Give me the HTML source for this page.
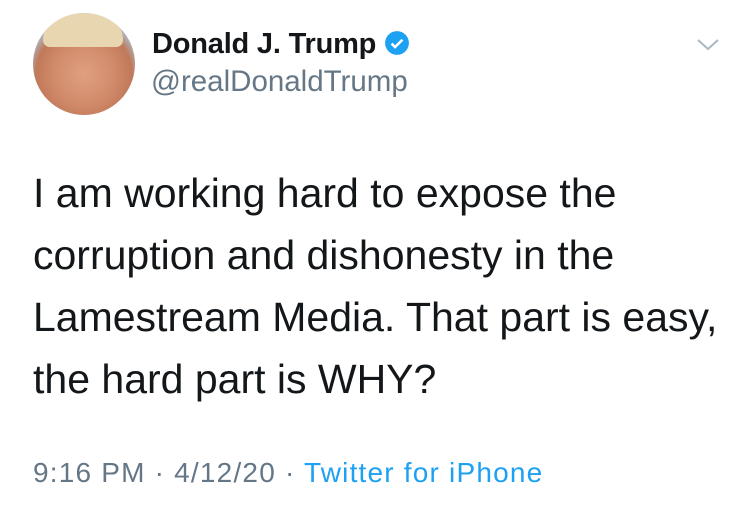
<!DOCTYPE html>
<html><head><style>
body{margin:0;width:750px;height:508px;background:#fff;font-family:"Liberation Sans",sans-serif;position:relative;overflow:hidden}
.av{position:absolute;left:33px;top:13px;width:102px;height:102px;border-radius:50%;background:radial-gradient(circle at 50% 60%,#e0a080 0%,#d08a6a 40%,#c07a5a 60%,#a9c4dc 75%);overflow:hidden}
.hair{position:absolute;left:10px;top:0;width:80px;height:34px;background:#e8d6b0;border-radius:40px 40px 10px 10px}
.name{position:absolute;left:152px;top:28px;font-size:29px;font-weight:bold;color:#14171a;letter-spacing:-0.2px}
.handle{position:absolute;left:151px;top:65px;font-size:29.5px;color:#657786}
.body{position:absolute;left:33px;top:162px;font-size:41px;line-height:62px;color:#14171a;letter-spacing:0px}
.foot{position:absolute;left:33px;top:457px;font-size:28px;color:#657786;letter-spacing:1.2px}
.foot span{color:#1da1f2}
</style></head><body>
<div class="av"><div class="hair"></div></div>
<div class="name">Donald J. Trump <svg width="26" height="26" viewBox="0 0 24 24" style="vertical-align:-3px"><circle cx="12" cy="12" r="11" fill="#1da1f2"/><path d="M7 12.5l3.2 3.2L17 9" stroke="#fff" stroke-width="2.4" fill="none"/></svg></div>
<div class="handle">@realDonaldTrump</div>
<svg style="position:absolute;left:697px;top:38px" width="22" height="14" viewBox="0 0 22 14"><path d="M1 2l10 9 10-9" stroke="#aab8c2" stroke-width="2" fill="none"/></svg>
<div class="body">I am working hard to expose the<br>corruption and dishonesty in the<br>Lamestream Media. That part is easy,<br>the hard part is WHY?</div>
<div class="foot">9:16 PM · 4/12/20 · <span>Twitter for iPhone</span></div>
</body></html>
